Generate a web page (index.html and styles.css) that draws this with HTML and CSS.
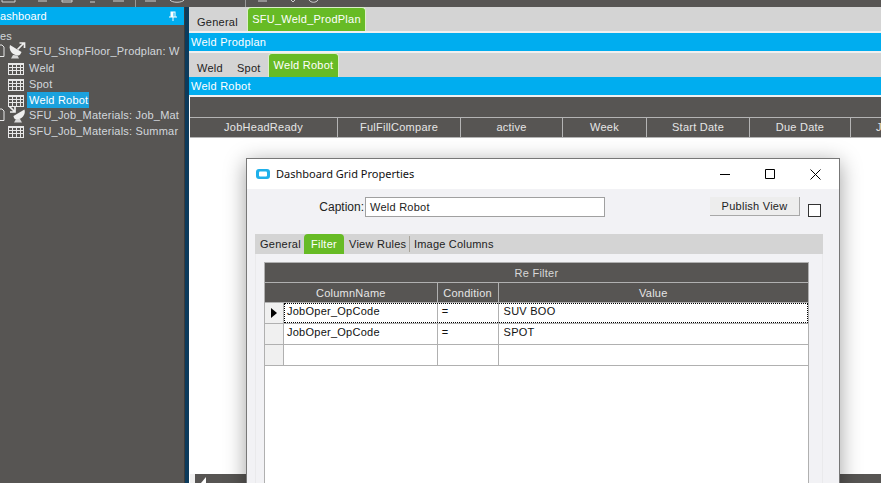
FILE: index.html
```html
<!DOCTYPE html>
<html lang="en">
<head>
<meta charset="utf-8">
<title>Dashboard Grid Properties</title>
<link rel="stylesheet" href="styles.css">
</head>
<body>
<svg class="defs" width="0" height="0">
  <symbol id="grid" viewBox="0 0 16 12">
    <path d="M0 0H16V12H0Z" fill="#e8e8e8"/>
    <path d="M1 2h3v2H1zM5 2h3v2H5zM9 2h3v2H9zM13 2h2v2h-2zM1 5h3v2H1zM5 5h3v2H5zM9 5h3v2H9zM13 5h2v2h-2zM1 8h3v3H1zM5 8h3v3H5zM9 8h3v3H9zM13 8h2v3h-2z" fill="#575553"/>
  </symbol>
  <symbol id="doc" viewBox="0 0 8 14">
    <path d="M-4 1H2L4 3V12.500H-4Z" fill="none" stroke="#e8e8e8"/>
  </symbol>
</svg>
<header class="topbar">
  <svg class="topbar-art" width="881" height="7" viewBox="0 0 881 7">
    <path d="M2 0V2H15V0M38 1H47M62 0H72V2H62ZM90 2H95M113 1H124" fill="none" stroke="#d0d0d0"/>
    <path d="M135.500 0V7" stroke="#999"/>
    <path d="M145 1H156M170 0C172 3 182 3 184 0" fill="none" stroke="#d0d0d0"/>
    <path d="M245.500 0V7" stroke="#999"/>
    <path d="M258 1H267M291 0L293 2L295 0M309 0C311 3 316 3 318 0" fill="none" stroke="#d0d0d0"/>
  </svg>
</header>
<div class="app">
  <aside class="sidebar">
    <div class="side-head">
      <span>ashboard</span>
      <svg class="pin" width="10" height="10" viewBox="0 0 10 10"><path d="M2.500 .5H7.500V5.500H9V6.500H5.500V10H4.500V6.500H1V5.500H2.500ZM5.500 1.500V5.500H6.500V1.500Z" fill="#fff" fill-rule="evenodd"/></svg>
    </div>
    <ul class="tree">
      <li class="node"><span class="node-text clipped">es</span></li>
      <li class="node node-first">
        <svg class="doc" width="8" height="14"><use href="#doc"/></svg>
        <svg class="dish" width="17" height="17" viewBox="0 0 17 17">
          <path d="M1 3C-.5 8 3 13.500 9.500 13.500C11 13 12 11.500 12.500 10Z" fill="#efefef"/>
          <path d="M4 13 2 16.500H10L8.500 13.500Z" fill="#d8d8d8"/>
          <path d="M8.500 7.500 15 1M10.500 1H15.500V6" fill="none" stroke="#efefef" stroke-width="1.700"/>
        </svg>
        <span class="node-text">SFU_ShopFloor_Prodplan: W</span>
      </li>
      <li class="node indent"><svg class="gridicon" width="16" height="12"><use href="#grid"/></svg><span class="node-text">Weld</span></li>
      <li class="node indent"><svg class="gridicon" width="16" height="12"><use href="#grid"/></svg><span class="node-text">Spot</span></li>
      <li class="node indent"><svg class="gridicon" width="16" height="12"><use href="#grid"/></svg><span class="node-text selected">Weld Robot</span></li>
      <li class="node node-second">
        <svg class="doc" width="8" height="14"><use href="#doc"/></svg>
        <svg class="dish" width="17" height="17" viewBox="0 0 17 17">
          <path d="M15.500 3.500C17 8.500 13 13.500 7 13.500C5.500 13 4.500 11.500 4.500 10Z" fill="#efefef"/>
          <path d="M7 13 5 16.500H13L11 13Z" fill="#d8d8d8"/>
          <path d="M0 0 5.500 5.500M6 1V6H1" fill="none" stroke="#efefef" stroke-width="1.700"/>
        </svg>
        <span class="node-text">SFU_Job_Materials: Job_Mat</span>
      </li>
      <li class="node indent"><svg class="gridicon" width="16" height="12"><use href="#grid"/></svg><span class="node-text">SFU_Job_Materials: Summar</span></li>
    </ul>
  </aside>
  <div class="divider"></div>
  <main class="main">
    <nav class="tabs tabs-outer">
      <span class="tab tab-general">General</span>
      <span class="tab tab-on tab-prodplan">SFU_Weld_ProdPlan</span>
    </nav>
    <div class="caption-bar">Weld Prodplan</div>
    <nav class="tabs tabs-inner">
      <span class="tab tab-weld">Weld</span>
      <span class="tab tab-spot">Spot</span>
      <span class="tab tab-on tab-robot">Weld Robot</span>
    </nav>
    <div class="caption-bar caption-flush">Weld Robot</div>
    <section class="grid">
      <div class="grid-band"></div>
      <div class="grid-head">
        <span class="col c1">JobHeadReady</span>
        <span class="col c2">FulFillCompare</span>
        <span class="col c3">active</span>
        <span class="col c4">Week</span>
        <span class="col c5">Start Date</span>
        <span class="col c6">Due Date</span>
        <span class="col c7">J</span>
      </div>
      <div class="grid-body"></div>
      <div class="scrollbar"><span class="scroll-cap"></span><span class="scroll-track"><span class="scroll-arrow"></span></span></div>
    </section>
  </main>
</div>

<div class="dialog">
  <div class="dlg-title">
    <svg class="dlg-icon" width="14" height="10" viewBox="0 0 14 10"><rect width="14" height="10" rx="3" fill="#1fb0ea"/><rect x="3" y="2.500" width="8" height="5" rx="1" fill="#fff"/></svg>
    <span class="dlg-name">Dashboard Grid Properties</span>
    <span class="dlg-buttons">
      <svg width="10" height="10" viewBox="0 0 10 10"><path d="M0 5.500H10" stroke="#000"/></svg>
      <svg width="10" height="10" viewBox="0 0 10 10"><path d="M.5 .5H9.500V9.500H.5Z" fill="none" stroke="#000"/></svg>
      <svg width="11" height="11" viewBox="0 0 11 11"><path d="M.5 .5 10.500 10.500M10.500 .5 .5 10.500" stroke="#000" fill="none"/></svg>
    </span>
  </div>
  <div class="dlg-body">
    <div class="caption-row">
      <label class="cap-label">Caption:</label>
      <div class="cap-input">Weld Robot</div>
      <button class="publish">Publish View</button>
      <span class="checkbox"></span>
    </div>
    <div class="panel">
      <div class="dlg-tabs">
        <span class="dtab dtab-general">General</span>
        <span class="dtab dtab-on">Filter</span>
        <span class="dtab dtab-rules">View Rules</span>
        <span class="dtab dtab-image">Image Columns</span>
      </div>
      <div class="filter">
        <div class="filter-title">Re Filter</div>
        <div class="filter-head">
          <span class="fh fname">ColumnName</span>
          <span class="fh fcond">Condition</span>
          <span class="fh fval">Value</span>
        </div>
        <div class="frow">
          <span class="rowhead"><span class="arrow"></span></span>
          <div class="cells current">
            <span class="cell fname">JobOper_OpCode</span>
            <span class="cell fcond">=</span>
            <span class="cell fval">SUV BOO</span>
          </div>
        </div>
        <div class="frow">
          <span class="rowhead"></span>
          <div class="cells">
            <span class="cell fname">JobOper_OpCode</span>
            <span class="cell fcond">=</span>
            <span class="cell fval">SPOT</span>
          </div>
        </div>
        <div class="frow">
          <span class="rowhead"></span>
          <div class="cells">
            <span class="cell fname"></span>
            <span class="cell fcond"></span>
            <span class="cell fval"></span>
          </div>
        </div>
      </div>
    </div>
  </div>
</div>
</body>
</html>
```
FILE: styles.css
```css
* { box-sizing: border-box; }
html, body { margin: 0; padding: 0; }
body {
  position: relative;
  width: 881px;
  height: 483px;
  overflow: hidden;
  background: #575553;
  font-family: "Liberation Sans", Arial, sans-serif;
  font-size: 11px;
  letter-spacing: .25px;
  color: #222;
}
.defs { position: absolute; }
.topbar { height: 7px; background: #575553; }
.topbar-art { display: block; }
.app { display: flex; height: 476px; }

.sidebar { width: 184px; flex: none; background: #575553; overflow: hidden; }
.side-head {
  display: flex;
  align-items: center;
  justify-content: space-between;
  height: 18px;
  padding: 0 6px 0 0;
  background: #00adef;
  color: #fff;
  font-size: 11px;
  letter-spacing: .1px;
}
.pin { display: block; }
.tree { list-style: none; margin: 3px 0 0; padding: 0; }
.node { display: flex; align-items: center; height: 16px; white-space: nowrap; color: #d3d7dc; letter-spacing: .2px; }
.node.indent { padding-left: 8px; }
.node-first { margin: -1px 0 1px; }
.node-second { margin-top: -1px; }
.doc { flex: none; }
.dish { flex: none; display: block; margin: -1px -2px 0 1px; }
.gridicon { flex: none; display: block; margin-top: 2px; }
.node-text { padding: 1px; margin-left: 4px; line-height: 14px; }
.node .clipped { margin-left: 0; padding-left: 0; }
.node.indent .selected { height: 16px; margin-left: 3px; padding: 1px 1px 1px 2px; background: #1ba1dd; color: #fff; }

.divider { width: 5px; flex: none; background: #0c3b5c; border-left: 1px solid #3b3b3b; }

.main { flex: 1; min-width: 0; display: flex; flex-direction: column; background: #f0f0f0; }
.tabs { display: flex; align-items: flex-end; height: 24px; flex: none; background: #d4d4d4; }
.tabs-inner { margin-top: 2px; }
.tab { display: block; white-space: nowrap; line-height: 14px; padding-bottom: 2px; color: #222; }
.tab-general { padding-left: 8px; width: 58px; }
.tab-weld { padding-left: 8px; width: 48px; }
.tab-spot { width: 31px; }
.tab-on {
  height: 24px;
  padding: 4px 0 0;
  text-align: center;
  color: #fff;
  background: #67bb25;
  border: 1px solid #dcefcb;
  border-bottom: 0;
  border-radius: 4px 4px 0 0;
}
.tab-prodplan { width: 119px; }
.tab-robot { width: 71px; }
.caption-bar {
  flex: none;
  height: 18px;
  margin-top: 2px;
  padding-left: 2px;
  line-height: 18px;
  background: #00adef;
  color: #fff;
}
.caption-flush { margin-top: 0; }
.grid { flex: 1; display: flex; flex-direction: column; margin-top: 2px; padding-left: 1px; background: #fff; min-height: 0; }
.grid-band { height: 20px; flex: none; background: #575553; }
.grid-head {
  display: flex;
  height: 21px;
  flex: none;
  overflow: hidden;
  background: #575553;
  border-top: 1px solid #b4b4b4;
  border-bottom: 1px solid #b4b4b4;
}
.col {
  flex: none;
  line-height: 19px;
  text-align: center;
  color: #e6e6e6;
  border-right: 1px solid #b4b4b4;
}
.c1 { width: 148px; }
.c2 { width: 123px; }
.c3 { width: 102px; }
.c4 { width: 84px; }
.c5 { width: 103px; }
.c6 { width: 101px; }
.c7 { width: 60px; text-align: left; padding-left: 25px; border-right: 0; }
.grid-body { flex: 1; background: #fff; }
.scrollbar { height: 9px; flex: none; display: flex; }
.scroll-cap { width: 5px; flex: none; background: #f0f0f0; }
.scroll-track { flex: 1; position: relative; background: #575553; }
.scroll-arrow {
  position: absolute;
  left: 6px;
  top: 3px;
  width: 0;
  height: 0;
  border-style: solid;
  border-width: 0 0 6px 5px;
  border-color: transparent transparent #fff transparent;
}

.dialog {
  position: absolute;
  left: 246px;
  top: 158px;
  width: 594px;
  height: 340px;
  display: flex;
  flex-direction: column;
  background: #f2f2f5;
  border: 1px solid #777;
  box-shadow: 0 4px 20px rgba(0, 0, 0, .38);
}
.dlg-title {
  display: flex;
  align-items: center;
  flex: none;
  height: 30px;
  padding-left: 9px;
  background: #fff;
  color: #111;
  font-family: "Noto Sans", sans-serif;
  font-size: 11px;
  letter-spacing: 0;
}
.dlg-icon { display: block; flex: none; margin-right: 6px; }
.dlg-name { flex: 1; padding-bottom: 2px; }
.dlg-buttons { display: flex; align-items: center; gap: 35px; padding-right: 18px; }
.dlg-buttons svg { display: block; }
.dlg-body { flex: 1; display: flex; flex-direction: column; min-height: 0; }
.caption-row { display: flex; align-items: flex-start; flex: none; height: 45px; padding-top: 8px; }
.cap-label { width: 117px; text-align: right; line-height: 20px; font-size: 12px; letter-spacing: 0; color: #222; }
.cap-input {
  width: 240px;
  height: 20px;
  margin-left: 1px;
  padding-left: 4px;
  line-height: 18px;
  background: #fff;
  border: 1px solid #a0a0a0;
}
.publish {
  width: 90px;
  height: 19px;
  margin-left: 105px;
  padding: 0;
  font: inherit;
  font-size: 11px;
  letter-spacing: .25px;
  color: #222;
  background: #ededed;
  border: 0;
  border-right: 1px solid #a8a8a8;
  border-bottom: 1px solid #a8a8a8;
}
.checkbox {
  display: block;
  width: 13px;
  height: 13px;
  margin: 7px 0 0 8px;
  background: #fff;
  border: 1px solid #333;
}
.panel {
  flex: 1;
  margin: 0 16px 0 8px;
  display: flex;
  flex-direction: column;
  min-height: 0;
  border-left: 1px solid #eaeaec;
  border-right: 1px solid #eaeaec;
}
.dlg-tabs {
  display: flex;
  flex: none;
  height: 20px;
  margin: 0 -1px;
  background: #d4d4d4;
  line-height: 20px;
  white-space: nowrap;
}
.dtab { display: block; color: #222; }
.dtab-general { width: 49px; padding-left: 5px; }
.dtab-on { width: 40px; text-align: center; color: #fff; background: #67bb25; border-radius: 4px 4px 0 0; }
.dtab-rules { width: 65px; padding-left: 5px; }
.dtab-image { padding-left: 4px; border-left: 1px solid #a9a49a; height: 16px; margin-top: 2px; line-height: 16px; letter-spacing: .2px; }
.filter {
  flex: 1;
  margin: 8px 13px 0 8px;
  background: #fff;
  border: 1px solid #b0b0b0;
  border-bottom: 0;
  min-height: 0;
}
.filter-title { height: 19px; line-height: 21px; text-align: center; background: #575553; color: #d8d8d8; }
.filter-head {
  display: flex;
  height: 21px;
  background: #575553;
  border-top: 1px solid #b0b0b0;
  border-bottom: 1px solid #b0b0b0;
}
.fh { display: block; line-height: 21px; text-align: center; color: #e6e6e6; border-right: 1px solid #b0b0b0; }
.fname { width: 154px; }
.fcond { width: 61px; }
.fval { width: 310px; }
.filter-head .fname { width: 173px; }
.filter-head .fval { border-right: 0; }
.frow { display: flex; height: 21px; border-bottom: 1px solid #b0b0b0; }
.rowhead { display: flex; align-items: center; justify-content: center; width: 19px; flex: none; background: #f0f0f0; border-right: 1px solid #b0b0b0; }
.arrow { display: block; width: 0; height: 0; border-style: solid; border-width: 5px 0 5px 6px; border-color: transparent transparent transparent #000; }
.cells { display: flex; flex: 1; min-width: 0; }
.cells.current { outline: 1px dotted #000; outline-offset: -1px; }
.cell { display: block; height: 20px; padding: 1px 0 0 3px; line-height: 14px; color: #111; border-right: 1px solid #b0b0b0; }
.cell.fcond { padding-left: 4px; }
.cell.fval { padding-left: 5px; border-right: 0; }
```
